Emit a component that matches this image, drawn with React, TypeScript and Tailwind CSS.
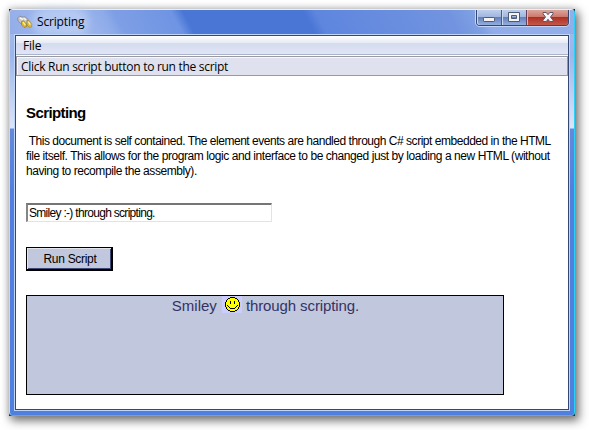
function PlugIcon() {
  return (
    <svg width="16" height="14" viewBox="0 0 16 14" className="shrink-0">
      <path d="M0.5 3 L2.5 1.2 L5 2 L8 1.8 L10.8 4 L11.2 8 L8 10.2 L4 8.7 L1.2 6.2Z" fill="#c4c4c1" stroke="#85878c" strokeWidth=".8" />
      <path d="M3 3 L6 4.5 M6.5 3 L9 5" stroke="#f6f6f4" strokeWidth="1.4" />
      <path d="M4.5 6.5 L6.5 5.8 L9.5 9.2 L9.3 12 L7 12.3 L4.5 9.8Z" fill="#e6b821" stroke="#8f731f" strokeWidth=".6" />
      <path d="M9.8 5.8 L11.5 5.3 L14.8 9 L14.6 12 L12 12.3 L10 9.8Z" fill="#e6b821" stroke="#8f731f" strokeWidth=".6" />
      <path d="M6 7.2 L8.3 10 M11.2 6.7 L13.3 9.6" stroke="#fff2a0" strokeWidth="1.2" />
    </svg>
  );
}

function Smiley() {
  return (
    <svg width="20" height="17" viewBox="0 0 20 17" className="block shrink-0 bg-[#ccccff]" shapeRendering="crispEdges">
      <path d="M8 1h5v1h2v1h1v1h1v2h1v5h-1v2h-1v1h-1v1h-2v1H8v-1H6v-1H5v-1H4v-2H3V6h1V4h1V3h1V2h2z" fill="#000" />
      <path d="M8 2h5v1h2v1h1v2h1v5h-1v2h-1v1h-2v1H8v-1H6v-1H5v-2H4V6h1V4h1V3h2z" fill="#ffff00" />
      <path d="M8 5h1v3H8zM12 5h1v3h-1zM5 9h1v1H5zM15 9h1v1h-1zM6 10h1v1H6zM14 10h1v1h-1zM7 11h1v1H7zM13 11h1v1h-1zM8 12h5v1H8z" fill="#000" />
    </svg>
  );
}

function CaptionButtons() {
  return (
    <div className="mr-[5px] flex h-[16px] w-[93px] shrink-0 rounded-b-[4px] border border-t-0 border-[#35476f] shadow-[0_1px_0_0_#c3d4f6,1px_0_0_0_#c3d4f6,-1px_0_0_0_#c3d4f6]">
      <div className="flex w-[25px] items-center justify-center rounded-bl-[3px] border-r border-[#455b8b] bg-[linear-gradient(#bdcdec_0%,#9fb5df_48%,#6581bb_50%,#93aee1_100%)] shadow-[inset_1px_0_#cad7ef]">
        <svg width="13" height="6" viewBox="0 0 13 6" className="mt-[4px]">
          <rect x=".5" y=".5" width="11" height="4" rx=".7" fill="#f4f4f4" stroke="#4e5b72" />
        </svg>
      </div>
      <div className="flex w-[25px] items-center justify-center border-r border-[#62405c] bg-[linear-gradient(#bdcdec_0%,#9fb5df_48%,#6581bb_50%,#93aee1_100%)] shadow-[inset_1px_0_#cad7ef]">
        <svg width="13" height="11" viewBox="0 0 13 11">
          <path d="M.5 .5h11v9H.5z M3.5 3.5v3h5v-3z" fillRule="evenodd" fill="#f4f4f4" stroke="#4e5b72" />
        </svg>
      </div>
      <div className="flex flex-1 items-center justify-center rounded-br-[3px] bg-[linear-gradient(#dba49e_0%,#cc7668_48%,#ae3024_50%,#c4574b_100%)] shadow-[inset_1px_0_#e4b3af]">
        <svg width="12" height="11" viewBox="0 0 12 11">
          <path d="M1 .5h3.3L6 2.7 7.7 .5H11v1.3L8.5 5 11 8.3v1.2H7.7L6 7.3 4.3 9.5H1V8.3L3.5 5 1 1.8z" fill="#f6f6f6" stroke="#5c5667" />
        </svg>
      </div>
    </div>
  );
}

export default function App() {
  return (
    <main className="h-[430px] w-[589px] overflow-hidden bg-white pt-[9px] pl-[9px] font-['Liberation_Sans',Arial,sans-serif] text-black">
      <div className="h-[407px] w-[566px] bg-[#102d32] shadow-[3px_4px_9px_1px_rgba(0,0,0,0.5),0_0_7px_1px_rgba(0,0,0,0.15)]">
        <section className="flex h-full flex-col rounded-[4px] border border-t-[#e3effc] border-r-[#2bd0f7] border-b-[#36baf1] border-l-[#c7d9f7] bg-[linear-gradient(#a3bced_0px,#9bb6ec_45px,#dce5f8_118px,#6289dc_119px,#527fdf_180px,#4f7fdf_100%)]">
          <header className="flex h-[24px] shrink-0 items-start justify-between rounded-t-[3px] bg-[linear-gradient(62deg,#93ade9_0%,#a3bbee_12%,#8eabe9_18%,#7e9fe6_20%,#6f94e3_30%,#4a77d6_32%,#4a76d6_53%,#5e86de_55%,#7294e0_78%,#7e9fe2_82%,#91acea_84%,#93afe9_100%)]">
            <div className="flex h-full items-center pl-[7px]">
              <PlugIcon />
              <span className="ml-[4px] rounded-full bg-[#c1d3f5]/60 text-[12px] font-normal shadow-[0_0_7px_5px_rgba(193,211,245,0.6)] font-['Open_Sans','Noto_Sans',sans-serif] tracking-[-0.16px]">Scripting</span>
            </div>
            <CaptionButtons />
          </header>
          <div className="mx-[4px] h-[377px] border border-[#c0d5fa]">
            <div className="flex h-full flex-col border border-[#334875] bg-white">
              <nav className="flex h-[19px] shrink-0 items-center border-b border-[#a9b4cc] bg-[linear-gradient(#ffffff_0%,#e4e9f5_40%,#d4dbed_42%,#e1e6f6_100%)] pl-[7px] font-['Open_Sans','Noto_Sans',sans-serif] text-[12px] tracking-[-0.2px]">
                <span className="mt-[2px]">File</span>
              </nav>
              <div className="mt-px flex h-[20px] shrink-0 items-center border border-[#999aa1] bg-[#dfe2ee] pl-[4px] font-['Open_Sans','Noto_Sans',sans-serif] text-[12px] tracking-[-0.29px] whitespace-nowrap shadow-[inset_1px_1px_#f7f8fc]">
                <span className="mt-[2px]">Click Run script button to run the script</span>
              </div>
              <article className="flex flex-col items-start pt-[28px] pl-[10px]">
                <h1 className="h-[18px] text-[15px] leading-[18px] font-bold tracking-[-0.6px]">Scripting</h1>
                <div className="mt-[12px] h-[45px] text-[12px] leading-[15px] whitespace-pre">
                  <p className="tracking-[-0.47px]"> This document is self contained. The element events are handled through C# script embedded in the HTML</p>
                  <p className="tracking-[-0.43px]">file itself. This allows for the program logic and interface to be changed just by loading a new HTML (without</p>
                  <p className="tracking-[-0.43px]">having to recompile the assembly).</p>
                </div>
                <input readOnly value="Smiley :-) through scripting." aria-label="Message" className="mt-[24px] h-[19px] w-[246px] border-t-2 border-r border-b border-l-2 border-t-[#757575] border-r-[#e3e3e3] border-b-[#e3e3e3] border-l-[#858585] bg-white pl-px text-[12px] leading-[15px] tracking-[-0.7px] outline-none" />
                <button type="button" className="mt-[25px] h-[24px] w-[87px] border-t border-r-2 border-b-2 border-l border-black bg-[#c1c7dc] pl-[2px] text-[12px] tracking-[-0.3px] shadow-[inset_1px_1px_#e4e6ef,inset_-1px_-1px_#3e4a76]">Run Script</button>
                <div className="mt-[24px] flex h-[100px] w-[478px] items-start justify-center border border-black bg-[#c1c7dc] pl-px text-[15px] leading-[20px] text-[#333366]">
                  <span>Smiley</span>
                  <span className="mr-[4px] ml-[5px]"><Smiley /></span>
                  <span className="tracking-[-0.1px]">through scripting.</span>
                </div>
              </article>
            </div>
          </div>
        </section>
      </div>
    </main>
  );
}
